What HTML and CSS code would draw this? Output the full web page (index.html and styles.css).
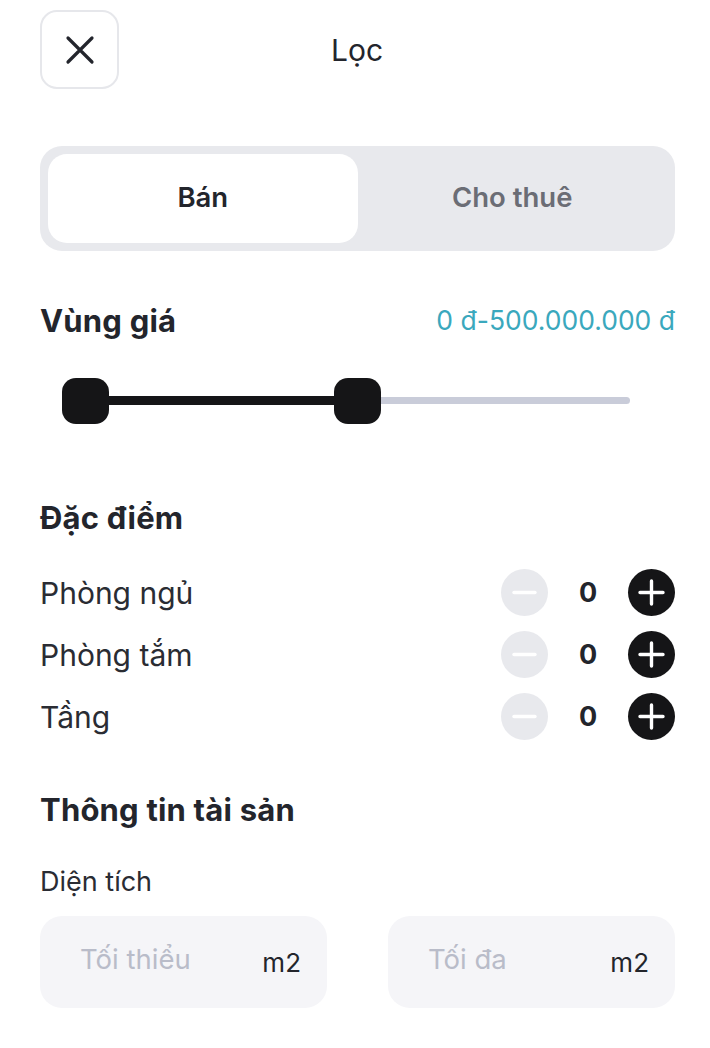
FILE: index.html
```html
<!DOCTYPE html>
<html lang="vi">
<head>
<meta charset="utf-8">
<link rel="stylesheet" href="styles.css">
</head>
<body>
<div class="page">
  <header class="top">
    <button class="close" aria-label="Đóng">
      <svg width="30" height="30" viewBox="0 0 30 30"><path d="M3 3L27 27M27 3L3 27" stroke="#23252c" stroke-width="3.2" stroke-linecap="round"/></svg>
    </button>
    <div class="title">Lọc</div>
  </header>

  <div class="segment">
    <div class="seg active">Bán</div>
    <div class="seg">Cho thuê</div>
  </div>

  <div class="row-head">
    <div class="h">Vùng giá</div>
    <div class="price">0 đ-500.000.000 đ</div>
  </div>

  <div class="slider">
    <div class="track"></div>
    <div class="fill"></div>
    <div class="knob k1"></div>
    <div class="knob k2"></div>
  </div>

  <div class="h sec">Đặc điểm</div>
  <div class="counters">
    <div class="counter">
      <span class="label">Phòng ngủ</span>
      <div class="ctrl">
        <span class="btn minus"><svg width="47" height="47" viewBox="0 0 47 47"><path d="M13 23.5H34" stroke="#fff" stroke-width="3.4" stroke-linecap="round"/></svg></span>
        <span class="num">0</span>
        <span class="btn plus"><svg width="47" height="47" viewBox="0 0 47 47"><path d="M12 23.5H35M23.5 12V35" stroke="#fff" stroke-width="3.4" stroke-linecap="round"/></svg></span>
      </div>
    </div>
    <div class="counter">
      <span class="label">Phòng tắm</span>
      <div class="ctrl">
        <span class="btn minus"><svg width="47" height="47" viewBox="0 0 47 47"><path d="M13 23.5H34" stroke="#fff" stroke-width="3.4" stroke-linecap="round"/></svg></span>
        <span class="num">0</span>
        <span class="btn plus"><svg width="47" height="47" viewBox="0 0 47 47"><path d="M12 23.5H35M23.5 12V35" stroke="#fff" stroke-width="3.4" stroke-linecap="round"/></svg></span>
      </div>
    </div>
    <div class="counter">
      <span class="label">Tầng</span>
      <div class="ctrl">
        <span class="btn minus"><svg width="47" height="47" viewBox="0 0 47 47"><path d="M13 23.5H34" stroke="#fff" stroke-width="3.4" stroke-linecap="round"/></svg></span>
        <span class="num">0</span>
        <span class="btn plus"><svg width="47" height="47" viewBox="0 0 47 47"><path d="M12 23.5H35M23.5 12V35" stroke="#fff" stroke-width="3.4" stroke-linecap="round"/></svg></span>
      </div>
    </div>
  </div>

  <div class="h sec2">Thông tin tài sản</div>
  <div class="sub">Diện tích</div>
  <div class="inputs">
    <div class="field"><span class="ph">Tối thiểu</span><span class="unit">m2</span></div>
    <div class="field"><span class="ph">Tối đa</span><span class="unit">m2</span></div>
  </div>
</div>
</body>
</html>
```
FILE: styles.css
```css
* { box-sizing: border-box; }
html, body { margin: 0; padding: 0; background: #fff; }
body { font-family: Inter, "Noto Sans", sans-serif; color: #23252c; }
.page { width: 710px; padding: 10px 35px 0 40px; }

.top { position: relative; height: 79px; display: flex; align-items: center; }
.close {
  width: 79px; height: 79px; border: 2px solid #e6e7eb; border-radius: 17px;
  background: #fff; display: flex; align-items: center; justify-content: center; padding: 0;
}
.title {
  position: absolute; left: -40px; right: -35px; top: 0; height: 79px;
  display: flex; align-items: center; justify-content: center;
  font-size: 30px; font-weight: 400; color: #23252c; pointer-events: none;
  padding-left: 4px;
}

.segment {
  margin-top: 57px; height: 105px; background: #e8e9ed; border-radius: 22px;
  padding: 8px; display: flex;
}
.seg {
  flex: 1; display: flex; align-items: center; justify-content: center;
  font-size: 27.5px; font-weight: 600; color: #6b6d75; border-radius: 19px;
  padding-bottom: 3px;
}
.seg.active { background: #fff; color: #23252c; }

.row-head { margin-top: 49px; display: flex; justify-content: space-between; align-items: center; height: 40px; }
.h { font-size: 31px; font-weight: 700; color: #23252c; letter-spacing: 0.2px; }
.price { font-size: 26.5px; color: #3aa8bd; font-weight: 400; }

.slider { position: relative; height: 46px; margin-top: 38px; }
.track { position: absolute; left: 22px; width: 568px; top: 19px; height: 7px; background: #c9ccd9; border-radius: 4px; }
.fill { position: absolute; left: 30px; width: 290px; top: 18px; height: 9px; background: #151517; }
.knob { position: absolute; top: 0; width: 47px; height: 46px; background: #151517; border-radius: 14px; }
.k1 { left: 22px; }
.k2 { left: 294px; }

.sec { margin-top: 74px; height: 40px; line-height: 40px; }
.counters { margin-top: 31px; display: flex; flex-direction: column; gap: 15px; }
.counter { display: flex; justify-content: space-between; align-items: center; height: 47px; }
.label { font-size: 30px; font-weight: 400; color: #2a2c33; }
.ctrl { display: flex; align-items: center; }
.btn { width: 47px; height: 47px; border-radius: 50%; display: block; }
.btn svg { display: block; }
.minus { background: #e8e9ed; }
.plus { background: #151517; }
.num { width: 80px; text-align: center; font-size: 27px; font-weight: 700; color: #23252c; }

.sec2 { margin-top: 50px; height: 40px; line-height: 40px; }
.sub { margin-top: 35px; font-size: 27px; color: #2a2c33; height: 34px; line-height: 34px; }
.inputs { margin-top: 17px; display: grid; grid-template-columns: 287px 287px; column-gap: 61px; }
.field {
  height: 92px; background: #f5f5f8; border-radius: 22px;
  display: flex; align-items: center; justify-content: space-between; padding: 0 26px 0 40px;
}
.ph { font-size: 27.5px; color: #b9bcc9; margin-top: -6px; }
.unit { font-size: 26px; color: #23252c; }
```
